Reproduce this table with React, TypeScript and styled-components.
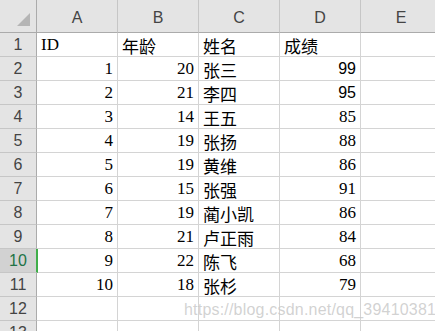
import styled, { createGlobalStyle } from "styled-components";

type Row = [string, string, string, string];

const rows: Row[] = [
  ["ID", "年龄", "姓名", "成绩"],
  ["1", "20", "张三", "99"],
  ["2", "21", "李四", "95"],
  ["3", "14", "王五", "85"],
  ["4", "19", "张扬", "88"],
  ["5", "19", "黄维", "86"],
  ["6", "15", "张强", "91"],
  ["7", "19", "蔺小凯", "86"],
  ["8", "21", "卢正雨", "84"],
  ["9", "22", "陈飞", "68"],
  ["10", "18", "张杉", "79"],
  ["", "", "", ""],
  ["", "", "", ""],
];

const columns = ["A", "B", "C", "D", "E"];
const selectedRow = 10;

const isNumber = (v: string) => /^\d+$/.test(v);

function App() {
  return (
    <>
      <GlobalStyle />
      <Sheet>
        <Corner>
          <CornerMark />
        </Corner>
        {columns.map((c) => (
          <ColHeader key={c}>{c}</ColHeader>
        ))}
        {rows.map((row, i) => {
          const n = i + 1;
          return [
            <RowHeader key={`h${n}`} $selected={n === selectedRow}>
              {n}
            </RowHeader>,
            ...row.map((v, j) => (
              <Cell
                key={`${n}-${j}`}
                $right={isNumber(v)}
                $sans={j === 3 && (n === 2 || n === 3)}
              >
                {v}
              </Cell>
            )),
            <Cell key={`${n}-e`} />,
          ];
        })}
        <Watermark>https://blog.csdn.net/qq_39410381</Watermark>
      </Sheet>
    </>
  );
}

const GlobalStyle = createGlobalStyle`
  html, body {
    margin: 0;
    padding: 0;
    background: #ffffff;
    overflow: hidden;
  }
`;

const Sheet = styled.div`
  position: relative;
  display: grid;
  grid-template-columns: 37px repeat(5, 81px);
  grid-template-rows: 33px;
  grid-auto-rows: 24px;
  width: 442px;
  height: 331px;
  overflow: hidden;
  background: #ffffff;
`;

const HeaderBase = styled.div`
  display: flex;
  justify-content: center;
  background: #e4e4e4;
  color: #444444;
  font-family: "Liberation Sans", Arial, sans-serif;
  font-size: 16px;
  box-sizing: border-box;
`;

const Corner = styled(HeaderBase)`
  position: relative;
  border-right: 1px solid #ababab;
  border-bottom: 1px solid #ababab;
`;

const CornerMark = styled.div`
  position: absolute;
  left: 17px;
  top: 13px;
  width: 0;
  height: 0;
  border-left: 13px solid transparent;
  border-bottom: 13px solid #b5b5b5;
`;

const ColHeader = styled(HeaderBase)`
  align-items: flex-end;
  padding-bottom: 5px;
  border-right: 1px solid #c6c6c6;
  border-bottom: 1px solid #ababab;
`;

const RowHeader = styled(HeaderBase)<{ $selected?: boolean }>`
  align-items: center;
  padding-top: 1px;
  background: ${(p) => (p.$selected ? "#d2d2d2" : "#e4e4e4")};
  color: ${(p) => (p.$selected ? "#217346" : "#444444")};
  border-bottom: 1px solid #c6c6c6;
  border-right: ${(p) => (p.$selected ? "2px solid #3fae49" : "1px solid #ababab")};
  margin-right: ${(p) => (p.$selected ? "-1px" : "0")};
  position: relative;
  z-index: 1;
`;

const Cell = styled.div<{ $right?: boolean; $sans?: boolean }>`
  display: flex;
  align-items: center;
  justify-content: ${(p) => (p.$right ? "flex-end" : "flex-start")};
  padding: 1px 4px 0 4px;
  box-sizing: border-box;
  border-right: 1px solid #d4d4d4;
  border-bottom: 1px solid #d4d4d4;
  color: #000000;
  font-family: ${(p) =>
    p.$sans
      ? `"Liberation Sans", Arial, "Noto Sans CJK SC", sans-serif`
      : `"Liberation Serif", "Times New Roman", "Noto Sans CJK SC", serif`};
  font-size: ${(p) => (p.$sans ? "16px" : "17px")};
  white-space: nowrap;
  overflow: hidden;
`;

const Watermark = styled.div`
  position: absolute;
  left: 184px;
  top: 300px;
  font-family: "Liberation Sans", Arial, sans-serif;
  font-size: 16px;
  letter-spacing: 0.2px;
  line-height: 20px;
  color: rgba(180, 180, 180, 0.6);
  text-shadow: 0 0 1px rgba(255, 255, 255, 0.6);
  white-space: nowrap;
  pointer-events: none;
`;

export default App;
